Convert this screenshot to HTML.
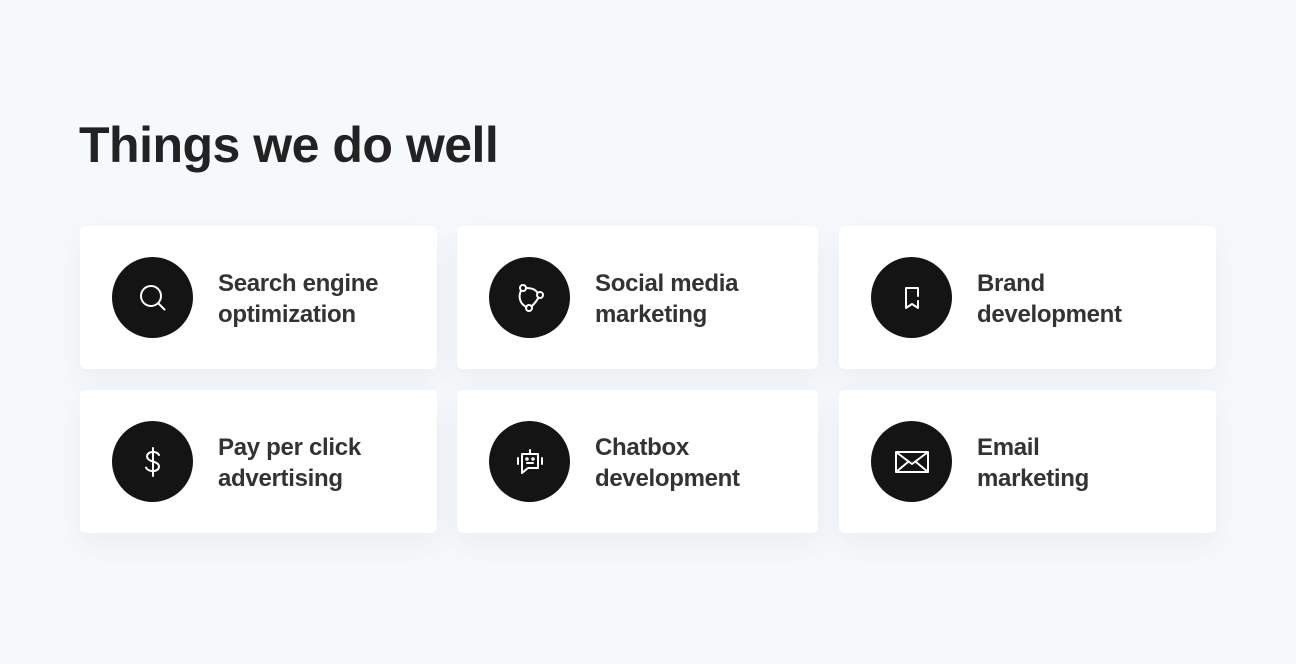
<!DOCTYPE html>
<html><head><meta charset="utf-8"><style>
*{margin:0;padding:0;box-sizing:border-box}
body{width:1296px;height:664px;background:#f6f9fb;font-family:"Liberation Sans",sans-serif;position:relative;overflow:hidden}
h1{position:absolute;left:79px;top:116px;font-size:50px;font-weight:700;color:#222;letter-spacing:-0.5px}
.card{position:absolute;background:#fff;border-radius:6px;box-shadow:0 12px 30px rgba(40,60,90,0.06)}
.ic{position:absolute;left:32px;top:31px;width:81px;height:81px;border-radius:50%;background:#141414;display:flex;align-items:center;justify-content:center}
.t{position:absolute;left:138px;top:42px;font-size:24px;line-height:31px;color:#333;font-weight:700;letter-spacing:-0.3px}
svg{fill:none;stroke:#fff;stroke-width:2;stroke-linecap:round;stroke-linejoin:round}
</style></head><body>
<h1>Things we do well</h1>

<div class="card" style="left:80px;top:226px;width:357px;height:143px">
<div class="ic"><svg width="40" height="40" viewBox="0 0 40 40"><circle cx="18" cy="18" r="10"/><path d="M25.5 25.5l6 6"/></svg></div>
<div class="t">Search engine<br>optimization</div></div>

<div class="card" style="left:457px;top:226px;width:361px;height:143px">
<div class="ic"><svg width="40" height="40" viewBox="0 0 40 40"><circle cx="13" cy="10" r="3"/><circle cx="30" cy="17" r="3"/><circle cx="19" cy="30" r="3"/><path d="M16 10c6 0 10 2 11.5 5M28.5 19.5c-2 4-5 7-7 9M16.5 29C10 26 8 19 11 12.5"/></svg></div>
<div class="t">Social media<br>marketing</div></div>

<div class="card" style="left:839px;top:226px;width:377px;height:143px">
<div class="ic"><svg width="40" height="40" viewBox="0 0 40 40"><path d="M26 17V10H14v20l6-4 6 4v-7M26 17v1"/></svg></div>
<div class="t">Brand<br>development</div></div>

<div class="card" style="left:80px;top:390px;width:357px;height:143px">
<div class="ic"><svg width="40" height="40" viewBox="0 0 40 40"><path d="M20 6v28M26 13c-1-2-3.5-3-6-3-3.5 0-6 1.8-6 4.5s2.5 4 6 5 6 2.3 6 5-2.5 4.5-6 4.5-6-1.2-7-3.5"/></svg></div>
<div class="t">Pay per click<br>advertising</div></div>

<div class="card" style="left:457px;top:390px;width:361px;height:143px">
<div class="ic"><svg width="40" height="40" viewBox="0 0 40 40"><path d="M20 8v4M12 12h16v14H18l-6 5v-5zM8 16v6M32 16v6"/><circle cx="17" cy="17" r="0.8"/><circle cx="23" cy="17" r="0.8"/><path d="M17 21h6"/></svg></div>
<div class="t">Chatbox<br>development</div></div>

<div class="card" style="left:839px;top:390px;width:377px;height:143px">
<div class="ic"><svg width="40" height="40" viewBox="0 0 40 40"><rect x="4" y="10" width="32" height="20" rx="1"/><path d="M4 10l16 12 16-12M4 30l12-10M36 30l-12-10"/></svg></div>
<div class="t">Email<br>marketing</div></div>
</body></html>
